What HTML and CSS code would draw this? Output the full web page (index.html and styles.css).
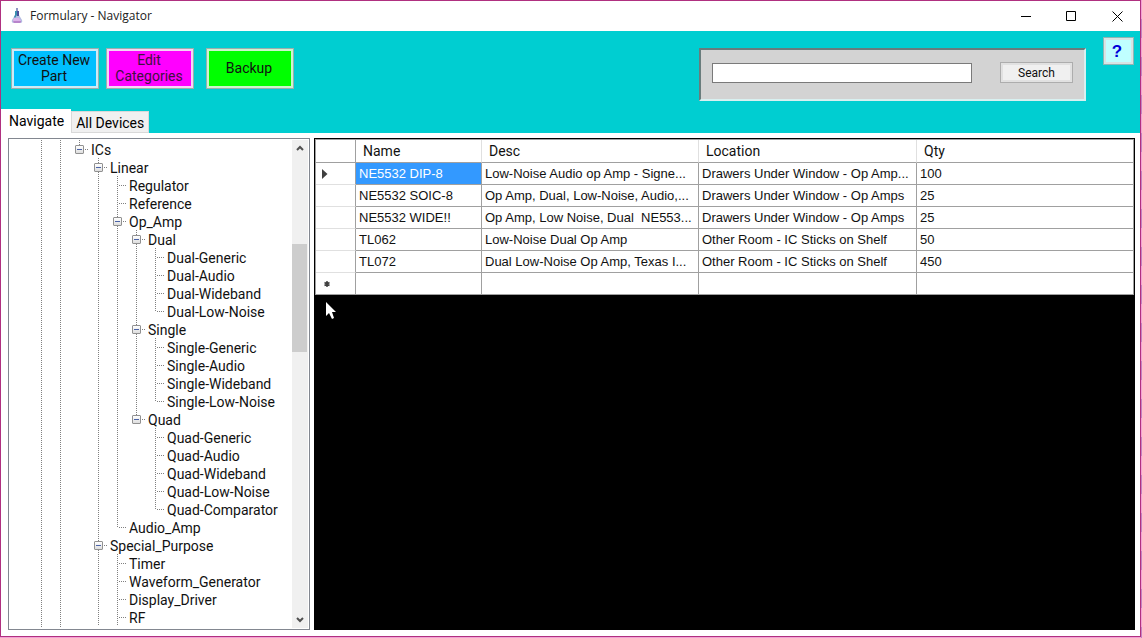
FILE: index.html
```html
<!DOCTYPE html>
<html lang="en">
<head>
<meta charset="utf-8">
<meta name="viewport" content="width=device-width, initial-scale=1">
<title>Formulary - Navigator</title>
<link rel="stylesheet" href="styles.css">
</head>
<body>
<div class="window">
  <header class="titlebar">
    <svg class="app-icon" viewBox="0 0 12 16" aria-hidden="true">
      <path d="M5 3h3v4l3 5q1 3-2 3H3q-3 0-2-3l3-5z" fill="#b4bce0"/>
      <path d="M4 3h2v4L4 10 3 9l1-2z" fill="#3a8fb0"/>
      <path d="M5 0h2v3H5z" fill="#8f96c4"/>
      <path d="M6 3h2v5H6z" fill="#4b4f9c"/>
      <path d="M3 10h5l2 3v1H2v-1z" fill="#dcb4ea"/>
      <path d="M2 13h8v1l-1 1H3z" fill="#b884cc"/>
    </svg>
    <h1 class="title">Formulary - Navigator</h1>
    <button class="win-btn" aria-label="Minimize"><svg viewBox="0 0 11 11"><path d="M1 5.500h10"/></svg></button>
    <button class="win-btn" aria-label="Maximize"><svg viewBox="0 0 11 11"><path d="M.5.5h9v9h-9z"/></svg></button>
    <button class="win-btn" aria-label="Close"><svg viewBox="0 0 11 11"><path d="M.5.5l10 10M10.500.5l-10 10"/></svg></button>
  </header>

  <div class="ribbon">
    <div class="toolbar">
      <button class="tool create">Create New Part</button>
      <button class="tool edit">Edit Categories</button>
      <button class="tool backup">Backup</button>
      <form class="search">
        <input class="search-box" type="text" aria-label="Search parts">
        <button class="search-btn" type="button">Search</button>
      </form>
      <button class="help" aria-label="Help">?</button>
    </div>
    <div class="tabs" role="tablist">
      <button class="tab active" role="tab" aria-selected="true">Navigate</button>
      <button class="tab" role="tab" aria-selected="false">All Devices</button>
    </div>
  </div>

  <main class="content">
    <nav class="tree-pane" aria-label="Categories">
      <div class="tree">
        <ul><li><ul><li><ul>
          <li class="last"><div class="row"><button class="toggle" aria-label="Collapse ICs"></button>ICs</div>
            <ul>
              <li><div class="row"><button class="toggle" aria-label="Collapse Linear"></button>Linear</div>
                <ul>
                  <li><div class="row leaf">Regulator</div></li>
                  <li><div class="row leaf">Reference</div></li>
                  <li><div class="row"><button class="toggle" aria-label="Collapse Op_Amp"></button>Op_Amp</div>
                    <ul>
                      <li><div class="row"><button class="toggle" aria-label="Collapse Dual"></button>Dual</div>
                        <ul>
                          <li><div class="row leaf">Dual-Generic</div></li>
                          <li><div class="row leaf">Dual-Audio</div></li>
                          <li><div class="row leaf">Dual-Wideband</div></li>
                          <li class="last"><div class="row leaf">Dual-Low-Noise</div></li>
                        </ul>
                      </li>
                      <li><div class="row"><button class="toggle" aria-label="Collapse Single"></button>Single</div>
                        <ul>
                          <li><div class="row leaf">Single-Generic</div></li>
                          <li><div class="row leaf">Single-Audio</div></li>
                          <li><div class="row leaf">Single-Wideband</div></li>
                          <li class="last"><div class="row leaf">Single-Low-Noise</div></li>
                        </ul>
                      </li>
                      <li class="last"><div class="row"><button class="toggle" aria-label="Collapse Quad"></button>Quad</div>
                        <ul>
                          <li><div class="row leaf">Quad-Generic</div></li>
                          <li><div class="row leaf">Quad-Audio</div></li>
                          <li><div class="row leaf">Quad-Wideband</div></li>
                          <li><div class="row leaf">Quad-Low-Noise</div></li>
                          <li class="last"><div class="row leaf">Quad-Comparator</div></li>
                        </ul>
                      </li>
                    </ul>
                  </li>
                  <li class="last"><div class="row leaf">Audio_Amp</div></li>
                </ul>
              </li>
              <li><div class="row"><button class="toggle" aria-label="Collapse Special_Purpose"></button>Special_Purpose</div>
                <ul>
                  <li><div class="row leaf">Timer</div></li>
                  <li><div class="row leaf">Waveform_Generator</div></li>
                  <li><div class="row leaf">Display_Driver</div></li>
                  <li><div class="row leaf">RF</div></li>
                </ul>
              </li>
            </ul>
          </li>
        </ul></li></ul></li></ul>
      </div>
      <div class="scrollbar">
        <button class="arrow" aria-label="Scroll up"><svg viewBox="0 0 8 7"><path d="M1 5l3-3 3 3"/></svg></button>
        <div class="track"><div class="thumb"></div></div>
        <button class="arrow" aria-label="Scroll down"><svg viewBox="0 0 8 7"><path d="M1 2l3 3 3-3"/></svg></button>
      </div>
    </nav>

    <section class="grid-pane" aria-label="Parts">
      <table class="grid">
        <colgroup><col class="c-mark"><col class="c-name"><col class="c-desc"><col class="c-loc"><col></colgroup>
        <thead>
          <tr><th></th><th>Name</th><th>Desc</th><th>Location</th><th>Qty</th></tr>
        </thead>
        <tbody>
          <tr><th><svg class="mark" viewBox="0 0 6 10"><path d="M0 0l5.500 5L0 10z"/></svg></th><td class="selected">NE5532 DIP-8</td><td>Low-Noise Audio op Amp - Signe...</td><td>Drawers Under Window - Op Amp...</td><td>100</td></tr>
          <tr><th></th><td>NE5532 SOIC-8</td><td>Op Amp, Dual, Low-Noise, Audio,...</td><td>Drawers Under Window - Op Amps</td><td>25</td></tr>
          <tr><th></th><td>NE5532 WIDE!!</td><td>Op Amp, Low Noise, Dual&nbsp; NE553...</td><td>Drawers Under Window - Op Amps</td><td>25</td></tr>
          <tr><th></th><td>TL062</td><td>Low-Noise Dual Op Amp</td><td>Other Room - IC Sticks on Shelf</td><td>50</td></tr>
          <tr><th></th><td>TL072</td><td>Dual Low-Noise Op Amp, Texas I...</td><td>Other Room - IC Sticks on Shelf</td><td>450</td></tr>
          <tr><th><svg class="star" viewBox="0 0 6 6"><path d="M3 0v6M.5 1.500l5 3M5.500 1.500l-5 3"/></svg></th><td></td><td></td><td></td><td></td></tr>
        </tbody>
      </table>
      <svg class="pointer" viewBox="0 0 12 18" aria-hidden="true"><path d="M1 0v14l3-3 3 6 2-1-2-6h4z"/></svg>
    </section>
  </main>
</div>
</body>
</html>
```
FILE: styles.css
```css
* { box-sizing: border-box; }

body {
  margin: 0;
  min-height: 100vh;
  display: flex;
  padding: 0 1px 1px 0;
  background: repeating-linear-gradient(#f2a0d4 0 19px, #c583c4 19px 38px) right / 1px 100% no-repeat #f2a0d4;
  font: 14px/18px Roboto, "Liberation Sans", sans-serif;
  color: #111;
}

button, input { font: inherit; color: inherit; margin: 0; }
button { padding: 0; border: 0; background: none; }
ul { list-style: none; margin: 0; padding: 0; }

.window {
  flex: 1;
  min-width: 0;
  display: flex;
  flex-direction: column;
  border: 1px solid #b03080;
  background: #fff;
}

/* Title bar */
.titlebar { display: flex; align-items: center; height: 30px; padding-left: 10px; }
.app-icon { width: 12px; height: 16px; margin-right: 7px; }
.title {
  flex: 1;
  margin: 0;
  font: 12px/16px "Open Sans", "Noto Sans", sans-serif;
  color: #222;
}
.win-btn { width: 46px; height: 28px; display: grid; place-items: center; }
.win-btn svg { width: 11px; height: 11px; fill: none; stroke: #000; }

/* Ribbon */
.ribbon {
  display: flex;
  flex-direction: column;
  justify-content: space-between;
  height: 102px;
  background: #00ced1;
}
.toolbar { display: flex; align-items: flex-start; padding: 6px 6px 0 10px; }
.tool {
  width: 88px;
  height: 41px;
  margin: 11px 7px 0 0;
  padding: 0 2px 1px 0;
  border: 1px solid #9aaeae;
  line-height: 16px;
}
.create { background: #00bfff; box-shadow: inset 0 0 0 2px #cdeaf5; }
.edit { background: #f0f; box-shadow: inset 0 0 0 2px #f5d5f5; margin-right: 12px; color: #401040; }
.backup { background: #0f0; box-shadow: inset 0 0 0 2px #cdf5cd; }
.search {
  display: flex;
  align-items: center;
  gap: 28px;
  margin: 11px 17px 0 auto;
  padding: 0 11px 4px 11px;
  height: 53px;
  border: 2px solid;
  border-color: #697c7c #d8f0f0 #d8f0f0 #697c7c;
  background: #d3d3d3;
}
.search-box { width: 260px; height: 20px; border: 1px solid #7a7a7a; background: #fff; }
.search-btn {
  width: 73px;
  height: 21px;
  border: 1px solid #adadad;
  box-shadow: inset 0 0 0 2px #e1e1e1;
  background: #f0f0f0;
  font-size: 12px;
  line-height: 16px;
}
.help {
  width: 31px;
  height: 28px;
  padding: 1px 3px 0 0;
  border: 1px solid #8fb5b5;
  box-shadow: inset 0 0 0 2px #d8e4e4;
  background: #c0ffff;
  color: #0000d8;
  font: bold 17px/20px "Liberation Sans", sans-serif;
}
.tabs { display: flex; align-items: flex-end; }
.tab {
  height: 22px;
  padding: 1px 4px 0;
  border: 1px solid #d9d9d9;
  background: #f0f0f0;
  color: #000;
}
.tab.active { height: 24px; padding: 0 7px 1px 8px; border: 0; background: #fff; }

/* Content */
.content { flex: 1; display: flex; gap: 4px; padding: 5px 5px 6px 7px; min-height: 0; }

/* Category tree */
.tree-pane {
  flex: none;
  display: flex;
  width: 302px;
  padding: 1px 1px 1px 0;
  border: 1px solid #828790;
}
.tree { flex: 1; padding-left: 28px; }
.tree > ul { height: 100%; }
.tree > ul > li, .tree > ul > li > ul, .tree > ul > li > ul > li { height: 100%; }
.tree li {
  background: repeating-linear-gradient(#808080 0 1px, transparent 1px 2px) 4px 0 / 1px 100% no-repeat;
}
.tree li.last { background-size: 1px 10px; }
.tree li > ul { padding-left: 19px; }
.row { display: flex; align-items: center; height: 18px; padding-top: 1px; white-space: nowrap; }
.toggle {
  position: relative;
  width: 9px;
  height: 9px;
  margin-right: 7px;
  border: 1px solid #919191;
  border-radius: 1px;
  background:
    linear-gradient(#4b63a7, #4b63a7) center / 5px 1px no-repeat,
    linear-gradient(#fff, #dedede);
}
.toggle::after {
  content: "";
  position: absolute;
  left: 8px;
  top: 3px;
  width: 4px;
  height: 1px;
  background: repeating-linear-gradient(to right, transparent 0 1px, #808080 1px 2px);
}
.leaf::before {
  content: "";
  width: 8px;
  height: 1px;
  margin: 0 3px 0 5px;
  background: repeating-linear-gradient(to right, transparent 0 1px, #808080 1px 2px);
}
.scrollbar { display: flex; flex-direction: column; width: 16px; background: #f0f0f0; }
.arrow { height: 17px; display: grid; place-items: center; }
.arrow svg { width: 8px; height: 7px; fill: none; stroke: #505050; stroke-width: 2; }
.track { flex: 1; display: flex; flex-direction: column; padding-top: 87px; }
.thumb { height: 108px; width: 15px; background: #cdcdcd; }

/* Parts grid */
.grid-pane {
  position: relative;
  flex: 1;
  min-width: 0;
  border: 1px solid #000;
  background: #000;
}
.grid {
  width: 100%;
  table-layout: fixed;
  border-spacing: 0;
  border-top: 1px solid #a0a0a0;
  border-left: 1px solid #a0a0a0;
  background: #fff;
}
.c-mark { width: 40px; }
.c-name { width: 126px; }
.c-desc { width: 217px; }
.c-loc { width: 218px; }
.grid th, .grid td {
  height: 22px;
  padding: 0 2px 0 3px;
  border-right: 1px solid #a0a0a0;
  border-bottom: 1px solid #a0a0a0;
  font-weight: normal;
  text-align: left;
  white-space: nowrap;
  overflow: hidden;
  text-overflow: ellipsis;
}
.grid td { font: 13px/18px "Liberation Sans", sans-serif; }
.grid thead th { height: 23px; padding-left: 7px; border-right-color: #e0e0e0; }
.grid thead th:first-child { border-right-color: #a0a0a0; }
.grid thead th:last-child { border-right-color: #a0a0a0; }
.grid tbody th { padding-left: 6px; border-bottom-color: #e0e0e0; }
.grid tbody tr:last-child th { border-bottom-color: #a0a0a0; padding-left: 8px; }
.grid .selected { background: #3399ff; color: #fff; }
.mark { display: block; width: 6px; height: 10px; fill: #404040; }
.star { display: block; width: 6px; height: 6px; stroke: #404040; stroke-width: 1.500; }
.pointer { position: absolute; left: 10px; top: 163px; width: 12px; height: 18px; fill: #fff; }
```
